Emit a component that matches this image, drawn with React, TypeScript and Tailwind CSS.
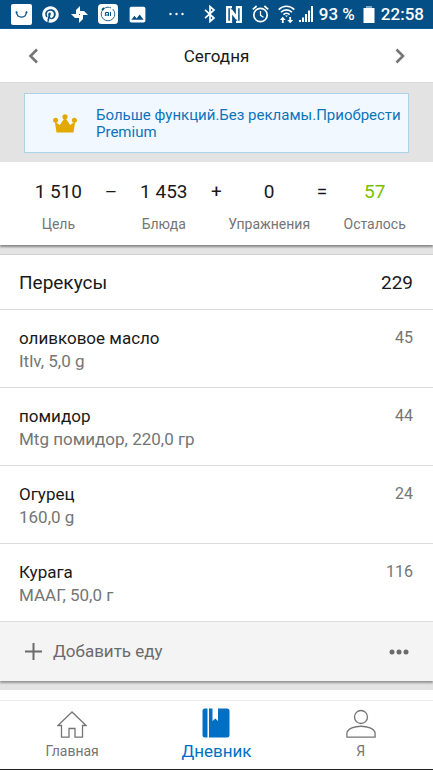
import type { ReactNode } from "react";
import { FaPinterest } from "react-icons/fa";
import { MdImage } from "react-icons/md";

const summary = [
  { value: "1 510", label: "Цель" },
  { value: "–" },
  { value: "1 453", label: "Блюда" },
  { value: "+" },
  { value: "0", label: "Упражнения" },
  { value: "=" },
  { value: "57", label: "Осталось", highlight: true },
];

const foods = [
  { name: "оливковое масло", details: "Itlv, 5,0 g", calories: 45 },
  { name: "помидор", details: "Mtg помидор, 220,0 гр", calories: 44 },
  { name: "Огурец", details: "160,0 g", calories: 24 },
  { name: "Курага", details: "МААГ, 50,0 г", calories: 116 },
];

function StatusBar() {
  return (
    <div className="flex h-[29px] items-center justify-between border-b border-[#0a5f9c] bg-[#044f86] pr-[9px] pl-[11px] text-white">
      <div className="flex items-center">
        <svg width="21" height="21" viewBox="0 0 21 21">
          <rect width="21" height="21" rx="2" fill="white" />
          <path d="M5.5 8C6 14.800 15 14.800 15.500 8" fill="none" stroke="#044f86" strokeWidth="1.300" />
          <circle cx="5.500" cy="8.300" r="1" fill="#044f86" />
          <circle cx="15.500" cy="8.300" r="1" fill="#044f86" />
        </svg>
        <FaPinterest className="ml-[10px] h-[17px] w-[17px]" />
        <svg className="ml-3" width="17" height="17" viewBox="0 0 17 17" fill="white">
          <path d="M9 0V8H5V4Z" />
          <path d="M17 9H9V5H13Z" />
          <path d="M8 17V9H12V13Z" />
          <path d="M0 8H8V12H4Z" />
        </svg>
        <svg className="ml-[10px]" width="20" height="20" viewBox="0 0 20 20">
          <rect width="20" height="20" rx="3.5" fill="white" />
          <circle cx="10" cy="10" r="6.8" fill="none" stroke="#2d6c9b" strokeWidth="1" strokeDasharray="35 2" />
          <path d="M4 6 6 4" stroke="#044f86" strokeWidth="1.8" />
          <path d="M7.4 12V8.5H10.5V12M9 9.8V12M12.5 8V12" fill="none" stroke="#044f86" strokeWidth="1" />
        </svg>
        <MdImage className="ml-[9px] h-[21px] w-[21px]" />
        <svg className="ml-[21px]" width="15" height="4" viewBox="0 0 15 4" fill="white">
          <circle cx="1.5" cy="2" r="1.2" />
          <circle cx="7.5" cy="2" r="1.2" />
          <circle cx="13.5" cy="2" r="1.2" />
        </svg>
      </div>
      <div className="flex items-center">
        <svg width="12" height="18" viewBox="0 0 12 18" fill="none" stroke="white" strokeWidth="1.7">
          <path d="M1 4.800 10 13 6 16.500V1.500L10 5 1 13.200" />
        </svg>
        <svg className="ml-[10px]" width="16" height="17" viewBox="0 0 16 17" fill="none" stroke="white">
          <path d="M6 1.2H1.2V15.8H5V5L11 13" strokeWidth="2.300" />
          <path d="M10 15.8H14.8V1.2H11V12L5 4" strokeWidth="2.300" />
        </svg>
        <svg className="ml-[10px]" width="17" height="18" viewBox="0 0 17 18" fill="none" stroke="white">
          <circle cx="8.5" cy="10" r="6.7" strokeWidth="1.7" />
          <path d="M8.5 6V10.3L11.5 12.2" strokeWidth="1.3" />
          <path d="M.8 4.3 4.6 1M16.2 4.3 12.4 1" strokeWidth="1.7" />
        </svg>
        <svg className="ml-[9px]" width="17" height="19" viewBox="0 0 17 19" fill="none" stroke="white">
          <path d="M.7 4.6C5 .2 12 .2 16.3 4.6M3 7.2C6 4.1 11 4.1 14 7.2M5.4 9.6C7.2 7.8 9.8 7.8 11.6 9.6" strokeWidth="1.6" />
          <path d="M7 10.4H10L8.5 12Z" fill="white" stroke="none" />
          <path d="M4.8 18V13M12.2 12V17" strokeWidth="1.8" />
          <path d="M1.9 15 4.8 11.8 7.7 15ZM9.3 15H15.1L12.2 18.3Z" fill="white" stroke="none" />
        </svg>
        <svg className="ml-1" width="14" height="16" viewBox="0 0 14 16" fill="white">
          <path d="M0 14H2V16H0ZM3 11.5H5V16H3ZM6 8H8V16H6ZM9 4.500H11V16H9ZM12 0H14V16H12Z" />
        </svg>
        <span className="ml-[6px] text-[17px] leading-5 font-medium">93 %</span>
        <svg className="ml-2" width="12" height="17" viewBox="0 0 12 17">
          <path d="M3 0H9V2H3Z" fill="#7fa5c2" />
          <path d="M.5 2H11.500V17H.5Z" fill="white" />
        </svg>
        <span className="ml-[6px] text-[17px] leading-5 font-medium">22:58</span>
      </div>
    </div>
  );
}

function DateHeader() {
  return (
    <header className="flex h-[53px] items-center justify-between bg-white px-[26px]">
      <button aria-label="Назад" className="p-0">
        <svg width="14" height="16" viewBox="0 0 14 16" fill="none" stroke="#757575" strokeWidth="2.6">
          <path d="M11 1.500 4.500 8 11 14.500" />
        </svg>
      </button>
      <h1 className="text-[17px] leading-6">Сегодня</h1>
      <button aria-label="Вперёд" className="p-0">
        <svg width="14" height="16" viewBox="0 0 14 16" fill="none" stroke="#757575" strokeWidth="2.6">
          <path d="M3.500 1.500 10 8 3.500 14.500" />
        </svg>
      </button>
    </header>
  );
}

function PremiumBanner() {
  return (
    <div className="border-t border-[#dadada] bg-[#e3e3e3] px-6 pt-[10px] pb-[9px]">
      <a href="#premium" className="flex h-[60px] items-center border border-[#add3ec] bg-[#f1f8ff] pr-1 pl-7 text-[#0c74bd]">
        <svg className="shrink-0" width="24" height="19" viewBox="0 0 24 19" fill="#e2aa00">
          <path d="M3.500 18.500 1.800 7.500 6.800 11 12 3.500 17.200 11 22.200 7.500 20.500 18.500Z" />
          <circle cx="2.600" cy="6.300" r="2.500" />
          <circle cx="12" cy="2.800" r="2.600" />
          <circle cx="21.400" cy="6.300" r="2.500" />
        </svg>
        <span className="ml-[19px] pt-0.5 text-[15px] leading-[17px]">Больше функций.Без рекламы.Приобрести Premium</span>
      </a>
    </div>
  );
}

function Summary() {
  return (
    <section className="relative grid h-[83px] grid-cols-7 bg-white px-8 pt-4 shadow-[0_2px_2px_rgba(0,0,0,0.4)]">
      {summary.map((item) => (
        <div key={item.value} className="flex flex-col items-center whitespace-nowrap">
          <span className={`text-[19px] leading-7 ${item.highlight ? "text-[#7ac000]" : ""}`}>{item.value}</span>
          {item.label && <span className="mt-2 text-[14px] leading-5 text-[#757575]">{item.label}</span>}
        </div>
      ))}
    </section>
  );
}

function Meal() {
  return (
    <section className="relative mt-[9px] border-t border-[#cfcfcf] bg-white shadow-[0_2px_2px_rgba(0,0,0,0.35)]">
      <div className="flex h-[55px] items-center justify-between border-b border-[#dcdcdc] pt-0.5 pr-5 pl-[19px] text-[19px]">
        <h2>Перекусы</h2>
        <span>229</span>
      </div>
      <ul>
        {foods.map((food) => (
          <li key={food.name} className="flex h-[78px] justify-between border-b border-[#dcdcdc] pt-4 pr-5 pl-[19px] text-[17px] leading-6">
            <div>
              <p>{food.name}</p>
              <p className="leading-[22px] text-[#757575]">{food.details}</p>
            </div>
            <span className="text-[16px] text-[#757575]">{food.calories}</span>
          </li>
        ))}
      </ul>
      <div className="flex h-[59px] items-center justify-between bg-[#f4f4f4] pr-6 pl-[25px] text-[#6b6b6b]">
        <button className="flex items-center gap-[11px] text-[17px]">
          <svg width="17" height="17" viewBox="0 0 17 17" stroke="currentColor" strokeWidth="2">
            <path d="M8.500 0V17M0 8.500H17" />
          </svg>
          Добавить еду
        </button>
        <button aria-label="Ещё">
          <svg width="20" height="6" viewBox="0 0 20 6" fill="currentColor">
            <circle cx="3" cy="3" r="2.500" />
            <circle cx="10" cy="3" r="2.500" />
            <circle cx="17" cy="3" r="2.500" />
          </svg>
        </button>
      </div>
    </section>
  );
}

function NavItem({ icon, label, active }: { icon: ReactNode; label: string; active?: boolean }) {
  return (
    <button
      className={`flex flex-col items-center pt-[7px] ${
        active ? "text-[17px] text-[#0070c5]" : "text-[14px] text-[#757575]"
      }`}
    >
      {icon}
      <span className="mt-[3px] leading-5">{label}</span>
    </button>
  );
}

function BottomNav() {
  return (
    <nav className="grid h-[70px] grid-cols-3 border-t border-b border-t-[#ececec] border-b-[#222222] bg-white">
      <NavItem
        label="Главная"
        icon={
          <svg width="30" height="30" viewBox="0 0 30 30" fill="none" stroke="currentColor" strokeWidth="1.3">
            <path d="M15 4 .9 17.500H4.500V29.200H12V20.500H18V29.200H25.500V17.500H29.100Z" />
          </svg>
        }
      />
      <NavItem
        active
        label="Дневник"
        icon={
          <svg width="30" height="30" viewBox="0 0 30 30" fill="currentColor">
            <path d="M4 .5H6.500V29.500H4Q1.500 29.500 1.500 27V3Q1.500.5 4 .5ZM8 .5H11.500V13L14.300 10.500 17 13V.5H26Q28.500.5 28.500 3V27Q28.500 29.500 26 29.500H8Z" />
          </svg>
        }
      />
      <NavItem
        label="Я"
        icon={
          <svg width="30" height="30" viewBox="0 0 30 30" fill="none" stroke="currentColor" strokeWidth="1.300">
            <circle cx="15" cy="9" r="6.500" />
            <path d="M.9 29.200V25C3 16 27 16 29.100 25V29.200Z" />
          </svg>
        }
      />
    </nav>
  );
}

export default function App() {
  return (
    <div className="flex min-h-screen flex-col bg-[#e3e3e3] font-[Roboto,sans-serif] text-[#191919]">
      <StatusBar />
      <DateHeader />
      <main className="flex flex-1 flex-col">
        <PremiumBanner />
        <Summary />
        <Meal />
        <div className="mt-[9px] min-h-[9px] flex-1 bg-white" />
      </main>
      <BottomNav />
    </div>
  );
}
